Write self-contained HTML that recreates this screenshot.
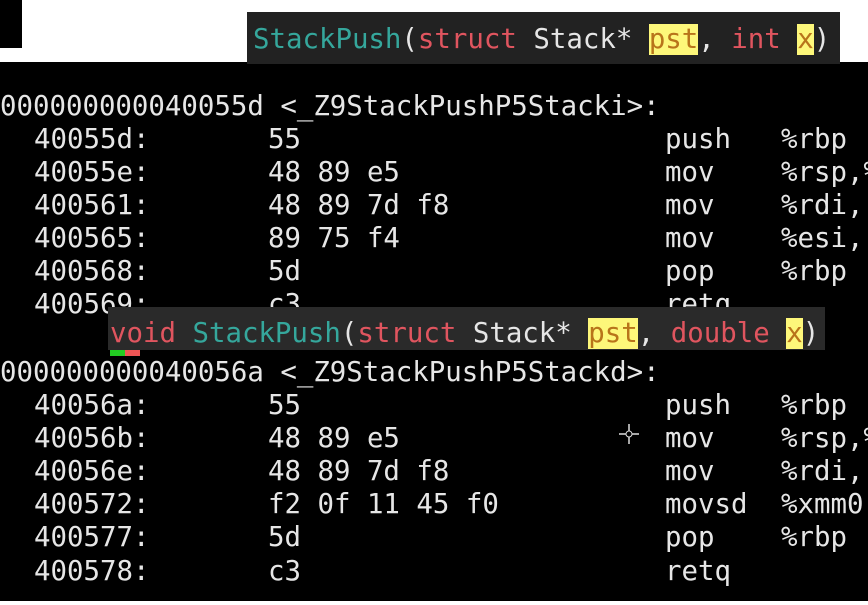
<!DOCTYPE html>
<html><head><meta charset="utf-8"><style>
body{margin:0;width:868px;height:605px;overflow:hidden;background:#fff;position:relative;font-family:"DejaVu Sans Mono","Liberation Mono",monospace;}
#term{position:absolute;left:0;top:62px;width:868px;height:539px;background:#000;}
.l{position:absolute;left:0;width:868px;height:33px;white-space:pre;font-size:27.4px;color:#e6e6e6;line-height:33px;}
.l span{position:absolute;top:0}
.a{left:34px}.b{left:268px}.m{left:665px}.o{left:781px}
.pop{position:absolute;white-space:pre;font-size:27.4px;line-height:33px;color:#e6e6e6;}
.t{color:#35a79c}.r{color:#e0555f}.y{background:#fdf77a;color:#b8741a}
</style></head><body>
<div style="position:absolute;left:0;top:0;width:22px;height:48px;background:#000"></div>
<div id="term"></div>
<div class="pop" style="left:247px;top:12px;width:593px;height:52px;background:#222;"><span style="position:absolute;left:6px;top:11px"><span class="t">StackPush</span>(<span class="r">struct</span> Stack* <span class="y">pst</span>, <span class="r">int</span> <span class="y">x</span>)</span></div>
<div class="l" style="top:90px">000000000040055d &lt;_Z9StackPushP5Stacki&gt;:</div>
<div class="l" style="top:123px"><span class="a">40055d:</span><span class="b">55</span><span class="m">push</span><span class="o">%rbp</span></div>
<div class="l" style="top:156px"><span class="a">40055e:</span><span class="b">48 89 e5</span><span class="m">mov</span><span class="o">%rsp,%</span></div>
<div class="l" style="top:189px"><span class="a">400561:</span><span class="b">48 89 7d f8</span><span class="m">mov</span><span class="o">%rdi,</span></div>
<div class="l" style="top:222px"><span class="a">400565:</span><span class="b">89 75 f4</span><span class="m">mov</span><span class="o">%esi,</span></div>
<div class="l" style="top:255px"><span class="a">400568:</span><span class="b">5d</span><span class="m">pop</span><span class="o">%rbp</span></div>
<div class="l" style="top:288px"><span class="a">400569:</span><span class="b">c3</span><span class="m">retq</span></div>
<div class="pop" style="left:108px;top:307px;width:717px;height:43px;background:#2a2a2a;"><span style="position:absolute;left:2px;top:10px"><span class="r">void</span> <span class="t">StackPush</span>(<span class="r">struct</span> Stack* <span class="y">pst</span>, <span class="r">double</span> <span class="y">x</span>)</span></div>
<div style="position:absolute;left:110px;top:350px;width:15px;height:6px;background:#2c2"></div>
<div style="position:absolute;left:125px;top:350px;width:15px;height:6px;background:#e55"></div>
<div class="l" style="top:356px">000000000040056a &lt;_Z9StackPushP5Stackd&gt;:</div>
<div class="l" style="top:389px"><span class="a">40056a:</span><span class="b">55</span><span class="m">push</span><span class="o">%rbp</span></div>
<div class="l" style="top:422px"><span class="a">40056b:</span><span class="b">48 89 e5</span><span class="m">mov</span><span class="o">%rsp,%</span></div>
<div class="l" style="top:455px"><span class="a">40056e:</span><span class="b">48 89 7d f8</span><span class="m">mov</span><span class="o">%rdi,</span></div>
<div class="l" style="top:488px"><span class="a">400572:</span><span class="b">f2 0f 11 45 f0</span><span class="m">movsd</span><span class="o">%xmm0</span></div>
<div class="l" style="top:521px"><span class="a">400577:</span><span class="b">5d</span><span class="m">pop</span><span class="o">%rbp</span></div>
<div class="l" style="top:555px"><span class="a">400578:</span><span class="b">c3</span><span class="m">retq</span></div>
<svg style="position:absolute;left:618px;top:423px" width="22" height="22"><path d="M11 1V21M1 11H21" stroke="#ddd" stroke-width="1.5"/><circle cx="11" cy="11" r="3" fill="#000" stroke="#ddd"/></svg>
</body></html>
